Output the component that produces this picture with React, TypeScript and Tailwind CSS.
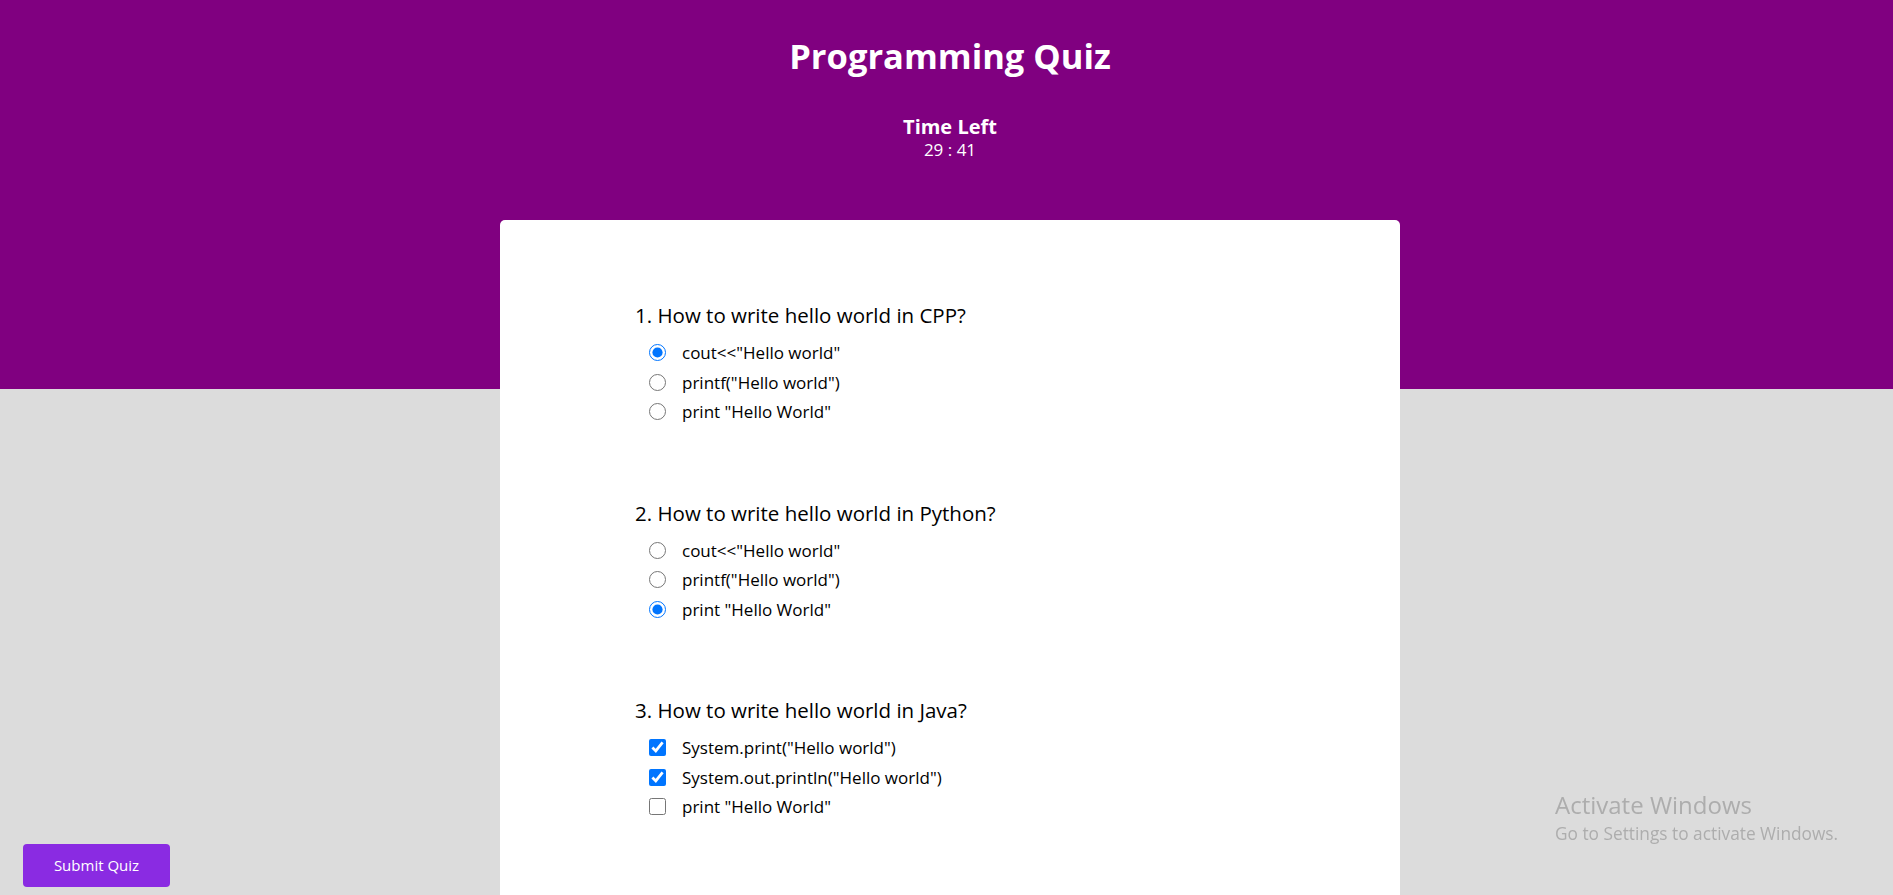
import React, { useState } from 'react';

type Question = {
  id: number;
  text: string;
  type: 'radio' | 'checkbox';
  options: string[];
};

const QUESTIONS: Question[] = [
  { id: 1, text: 'How to write hello world in CPP?', type: 'radio', options: ['cout<<"Hello world"', 'printf("Hello world")', 'print "Hello World"'] },
  { id: 2, text: 'How to write hello world in Python?', type: 'radio', options: ['cout<<"Hello world"', 'printf("Hello world")', 'print "Hello World"'] },
  { id: 3, text: 'How to write hello world in Java?', type: 'checkbox', options: ['System.print("Hello world")', 'System.out.println("Hello world")', 'print "Hello World"'] },
];

const App: React.FC = () => {
  const [answers, setAnswers] = useState<Record<number, number[]>>({ 1: [0], 2: [2], 3: [0, 1] });

  const handleChange = (q: Question, idx: number) => {
    setAnswers(prev => {
      const current = prev[q.id] || [];
      if (q.type === 'radio') return { ...prev, [q.id]: [idx] };
      return {
        ...prev,
        [q.id]: current.includes(idx) ? current.filter(i => i !== idx) : [...current, idx],
      };
    });
  };

  return (
    <div className="min-h-screen bg-[#dcdcdc] font-['Open_Sans',sans-serif]">
      {/* Header */}
      <div className="h-[389px] bg-[#800080] text-white pl-[7px] pt-[34px] flex flex-col items-center">
        <h1 className="text-[34.5px] leading-[44px] font-bold">Programming Quiz</h1>
        <div className="mt-[36px] flex flex-col items-center">
          <span className="text-[20px] leading-[25px] font-bold">Time Left</span>
          <span className="text-[17px] leading-[22px]">29 : 41</span>
        </div>
      </div>

      {/* Quiz card */}
      <div className="pl-[7px] -mt-[169px]">
        <div className="mx-auto w-[900px] bg-white rounded-[5px] pt-[80px] pb-[120px] pl-[135px]">
          {QUESTIONS.map((q, qi) => (
            <div key={q.id} className={qi > 0 ? 'mt-[71px]' : ''}>
              <h2 className="text-[20.5px] leading-[30px] text-black">{q.id}. {q.text}</h2>
              <div className="mt-2 pl-[14px]">
                {q.options.map((opt, i) => (
                  <label key={i} className="flex items-center gap-4 h-[29.5px] text-[17px] text-black cursor-pointer">
                    <input
                      type={q.type}
                      name={`q${q.id}`}
                      checked={(answers[q.id] || []).includes(i)}
                      onChange={() => handleChange(q, i)}
                      className="w-[17px] h-[17px] accent-[#0075ff]"
                    />
                    <span>{opt}</span>
                  </label>
                ))}
              </div>
            </div>
          ))}
        </div>
      </div>

      {/* Submit */}
      <button className="fixed left-[23px] bottom-[8px] w-[147px] h-[43px] bg-[#8a2be2] text-white text-[15px] rounded-[4px]">
        Submit Quiz
      </button>

      {/* Windows watermark */}
      <div className="fixed left-[1555px] top-[790px] text-[#adadad] pointer-events-none">
        <div className="text-[24px] leading-[30px]">Activate Windows</div>
        <div className="text-[17.3px] leading-[22px] mt-[3px]">Go to Settings to activate Windows.</div>
      </div>
    </div>
  );
};

export default App;
